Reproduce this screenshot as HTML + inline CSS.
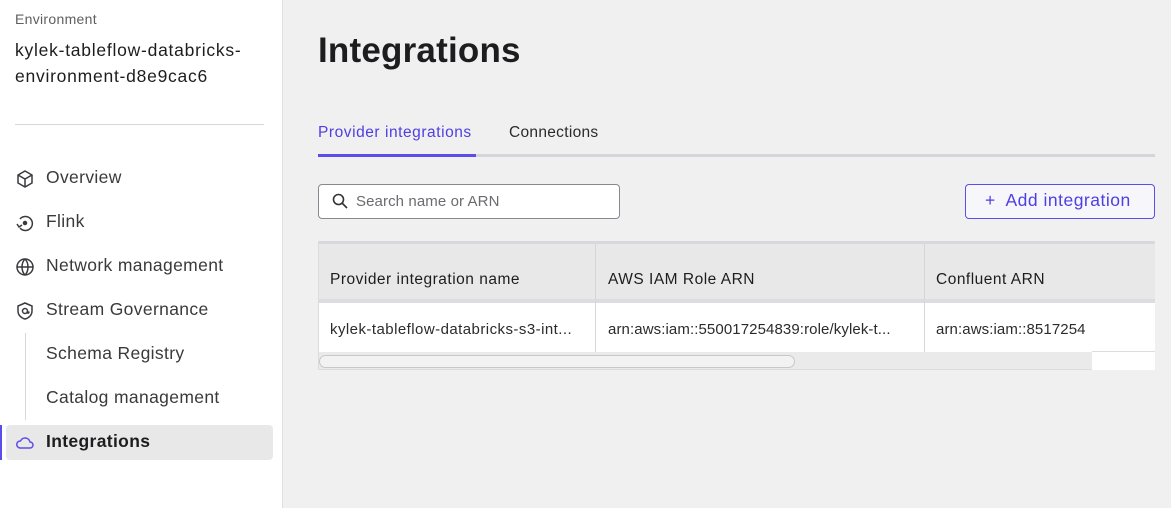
<!DOCTYPE html>
<html><head><style>
*{box-sizing:border-box;margin:0;padding:0}
body{width:1171px;height:508px;overflow:hidden;font-family:"Liberation Sans",sans-serif;background:#f1f0f0;position:relative;color:#1d1d1f}
.side{position:absolute;left:0;top:0;width:283px;height:508px;background:#fff;border-right:1px solid #e0dfe0}
.abs{position:absolute;white-space:nowrap}
.nav{position:absolute;left:46px;font-size:17.5px;letter-spacing:0.35px;color:#3a3a3d}
.ic{position:absolute;left:15px;width:20px;height:20px}
</style></head><body>
<div class="side">
<div class="abs" style="left:15px;top:11px;font-size:14px;letter-spacing:0.3px;color:#5f5f63">Environment</div>
<div class="abs" style="left:15px;top:37px;font-size:17.5px;letter-spacing:0.75px;line-height:26px;color:#1d1d1f">kylek-tableflow-databricks-<br>environment-d8e9cac6</div>
<div class="abs" style="left:15px;top:124px;width:249px;height:1px;background:#d8d7d9"></div>
<svg class="ic" style="top:169px" viewBox="0 0 20 20" fill="none" stroke="#3a3a3d" stroke-width="1.5"><path d="M10 2l7 4v8l-7 4-7-4V6z M3 6l7 4 7-4 M10 10v8"/></svg>
<div class="nav" style="top:167px">Overview</div>
<svg class="ic" style="top:213px" viewBox="0 0 20 20" fill="none" stroke="#3a3a3d" stroke-width="1.5"><path d="M5 6a7 7 0 1 1 0 9"/><circle cx="10" cy="10" r="1.5" fill="#3a3a3d"/><path d="M2 11l2 3 3-2"/></svg>
<div class="nav" style="top:211px">Flink</div>
<svg class="ic" style="top:257px" viewBox="0 0 20 20" fill="none" stroke="#3a3a3d" stroke-width="1.5"><circle cx="10" cy="10" r="8"/><path d="M2 10h16 M10 2c-4 4-4 12 0 16 M10 2c4 4 4 12 0 16"/></svg>
<div class="nav" style="top:255px">Network management</div>
<svg class="ic" style="top:301px" viewBox="0 0 20 20" fill="none" stroke="#3a3a3d" stroke-width="1.5"><path d="M10 2l7 3v5c0 4-3 7-7 8-4-1-7-4-7-8V5z"/><circle cx="10" cy="10" r="2.5"/><path d="M12.5 10v1.5c0 1 1.5 1 1.5-1"/></svg>
<div class="nav" style="top:299px">Stream Governance</div>
<div class="abs" style="left:25px;top:333px;width:1px;height:87px;background:#d8d7d9"></div>
<div class="nav" style="top:343px">Schema Registry</div>
<div class="nav" style="top:387px">Catalog management</div>
<div class="abs" style="left:0;top:425px;width:2px;height:35px;background:#5a4de8"></div>
<div class="abs" style="left:6px;top:425px;width:267px;height:35px;background:#e9e8e9;border-radius:4px"></div>
<svg class="ic" style="top:433px" viewBox="0 0 20 20" fill="none" stroke="#5a4de8" stroke-width="1.5"><path d="M5 15h10a3 3 0 0 0 0-6 5 5 0 0 0-9.5-1A3.5 3.5 0 0 0 5 15z"/></svg>
<div class="nav" style="top:431px;font-weight:bold;color:#1d1d1f">Integrations</div>
</div>

<div class="abs" style="left:318px;top:31px;font-size:35px;letter-spacing:0.2px;font-weight:bold;color:#1d1d1f">Integrations</div>
<div class="abs" style="left:318px;top:124px;font-size:15.5px;letter-spacing:0.55px;color:#4d3fe0">Provider integrations</div>
<div class="abs" style="left:509px;top:124px;font-size:15.5px;letter-spacing:0.3px;color:#2b2b2e">Connections</div>
<div class="abs" style="left:318px;top:154px;width:837px;height:3px;background:#d6d5da"></div>
<div class="abs" style="left:318px;top:154px;width:158px;height:3px;background:#5a4de8"></div>

<div class="abs" style="left:318px;top:184px;width:302px;height:35px;background:#fff;border:1px solid #8a8790;border-radius:4px"></div>
<svg class="abs" style="left:332px;top:193px" width="16" height="16" viewBox="0 0 16 16" fill="none" stroke="#333" stroke-width="1.6"><circle cx="6.5" cy="6.5" r="5"/><path d="M10 10l5 5"/></svg>
<div class="abs" style="left:356px;top:193px;font-size:15px;letter-spacing:0.1px;color:#6b6b70">Search name or ARN</div>

<div class="abs" style="left:965px;top:184px;width:190px;height:35px;border:1px solid #5a4de8;border-radius:4px;background:#f7f6fb"></div>
<div class="abs" style="left:985px;top:190px;font-size:17.5px;letter-spacing:0.5px;color:#4d3fe0">+&nbsp; Add integration</div>

<div class="abs" style="left:318px;top:241px;width:837px;height:129px;background:#ebeaeb;border:1px solid #dcdbde"></div>
<div class="abs" style="left:318px;top:241px;width:837px;height:3px;background:#d9d8dc"></div>
<div class="abs" style="left:319px;top:244px;width:836px;height:55px;background:#e9e8e9"></div>
<div class="abs" style="left:319px;top:299px;width:836px;height:4px;background:#dddce0"></div>
<div class="abs" style="left:319px;top:303px;width:836px;height:49px;background:#fff"></div>
<div class="abs" style="left:595px;top:244px;width:1px;height:108px;background:#d6d5d8"></div>
<div class="abs" style="left:924px;top:244px;width:1px;height:108px;background:#d6d5d8"></div>
<div class="abs" style="left:1092px;top:351px;width:63px;height:19px;background:#fff;border-top:1px solid #dcdbde"></div>
<div class="abs" style="left:319px;top:355px;width:476px;height:13px;border:1px solid #c8c7cb;border-radius:7px;background:#f2f2f2"></div>
<div class="abs" style="left:330px;top:271px;font-size:15.5px;letter-spacing:0.5px">Provider integration name</div>
<div class="abs" style="left:608px;top:271px;font-size:15.5px;letter-spacing:0.5px">AWS IAM Role ARN</div>
<div class="abs" style="left:936px;top:271px;font-size:15.5px;letter-spacing:0.5px">Confluent ARN</div>
<div class="abs" style="left:330px;top:321px;font-size:15px;letter-spacing:0.45px;color:#2b2b2e">kylek-tableflow-databricks-s3-int...</div>
<div class="abs" style="left:608px;top:321px;font-size:15px;letter-spacing:0.1px;color:#2b2b2e">arn:aws:iam::550017254839:role/kylek-t...</div>
<div class="abs" style="left:936px;top:321px;font-size:15px;letter-spacing:0.1px;color:#2b2b2e;width:156px;overflow:hidden">arn:aws:iam::8517254</div>
</body></html>
